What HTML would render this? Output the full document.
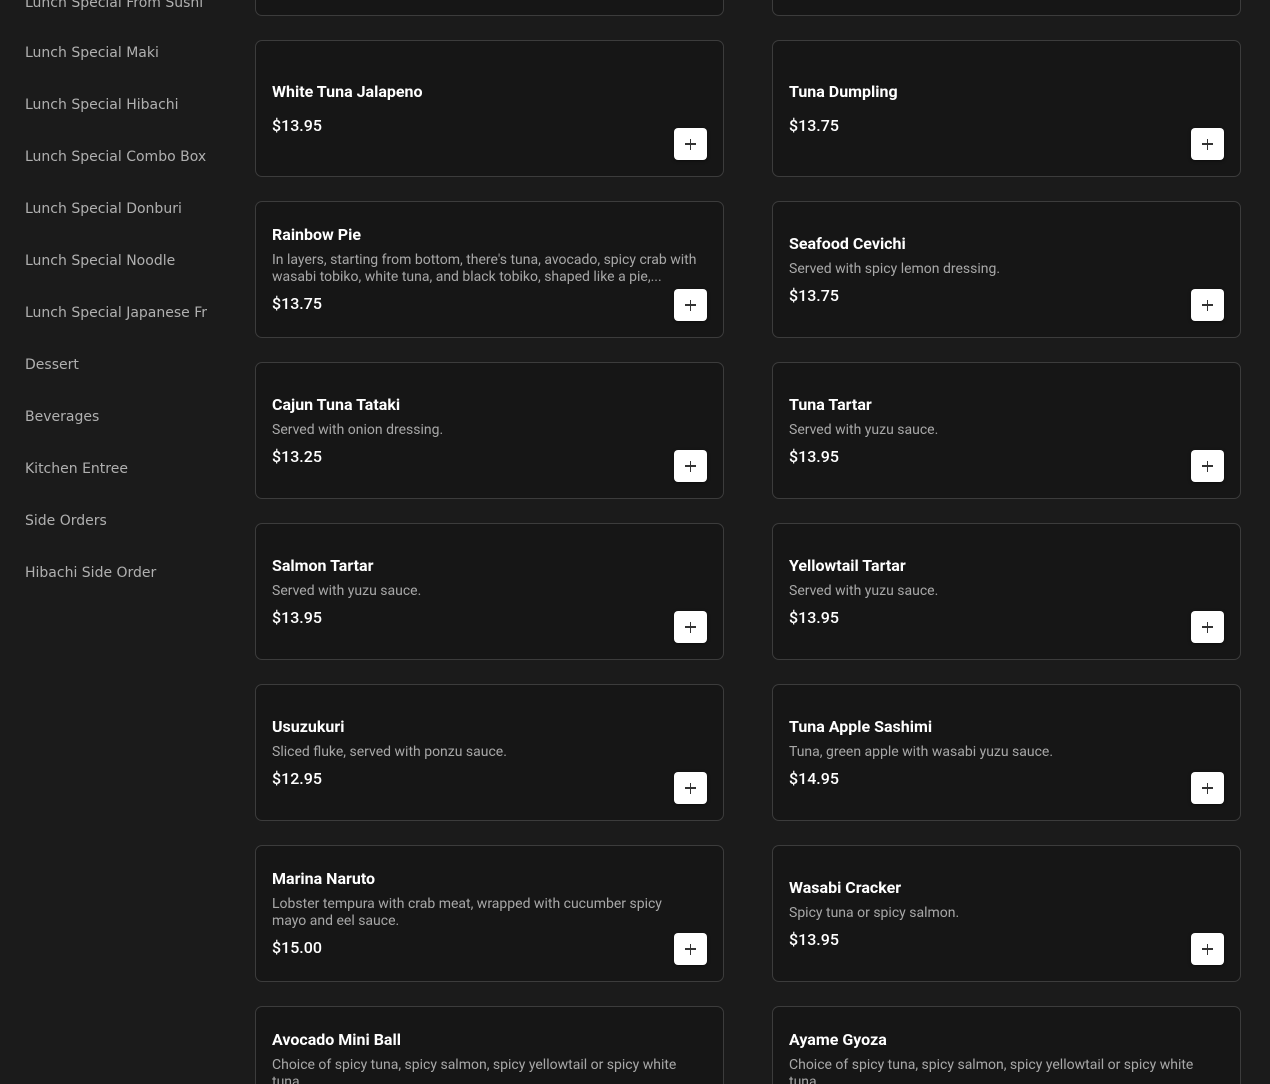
<!DOCTYPE html>
<html><head><meta charset="utf-8"><style>
*{box-sizing:border-box;margin:0;padding:0}
html,body{width:1270px;height:1084px;overflow:hidden}
body{background:#1b1b1b;position:relative;font-family:"Roboto","Liberation Sans",sans-serif}
.wrap{position:absolute;left:0;top:0;width:1270px;height:1084px;overflow:hidden}
.nav{position:absolute;left:25px;font-family:"DejaVu Sans",sans-serif;font-size:14px;color:#b0b0b0;line-height:20px}
.card{position:absolute;width:469px;height:137px;border:1px solid #3c3c3c;border-radius:7px;background:#161616;display:flex;flex-direction:column;justify-content:center;padding:0 16px}
.t{font-size:16px;font-weight:bold;color:#fff;line-height:20px;margin-bottom:7px}
.d{font-size:14px;color:#a8a8a8;line-height:17px;margin-bottom:8px;padding-right:10px}
.nd{margin-top:7px}
.p{font-size:16px;color:#fff;line-height:20px;font-weight:500}
.b{position:absolute;right:16px;bottom:16px;width:33px;height:32px;background:#fff;border-radius:4px;box-shadow:0 1px 3px rgba(0,0,0,.5)}
.b:before,.b:after{content:"";position:absolute;background:#333;left:11px;top:15px;width:11px;height:1.5px}
.b:after{left:15.75px;top:10.5px;width:1.5px;height:11px}
</style></head><body><div class="wrap">
<div class="nav" style="top:-7px">Lunch Special From Sushi</div>
<div class="nav" style="top:43px">Lunch Special Maki</div>
<div class="nav" style="top:95px">Lunch Special Hibachi</div>
<div class="nav" style="top:147px">Lunch Special Combo Box</div>
<div class="nav" style="top:199px">Lunch Special Donburi</div>
<div class="nav" style="top:251px">Lunch Special Noodle</div>
<div class="nav" style="top:303px">Lunch Special Japanese Fr</div>
<div class="nav" style="top:355px">Dessert</div>
<div class="nav" style="top:407px">Beverages</div>
<div class="nav" style="top:459px">Kitchen Entree</div>
<div class="nav" style="top:511px">Side Orders</div>
<div class="nav" style="top:563px">Hibachi Side Order</div>

<div class="card" style="left:255px;top:-121px"></div>
<div class="card" style="left:772px;top:-121px"></div>

<div class="card" style="left:255px;top:40px"><div class="t">White Tuna Jalapeno</div><div class="p nd">$13.95</div><div class="b"></div></div>
<div class="card" style="left:772px;top:40px"><div class="t">Tuna Dumpling</div><div class="p nd">$13.75</div><div class="b"></div></div>

<div class="card" style="left:255px;top:201px"><div class="t">Rainbow Pie</div><div class="d">In layers, starting from bottom, there's tuna, avocado, spicy crab with wasabi tobiko, white tuna, and black tobiko, shaped like a pie,...</div><div class="p">$13.75</div><div class="b"></div></div>
<div class="card" style="left:772px;top:201px"><div class="t">Seafood Cevichi</div><div class="d">Served with spicy lemon dressing.</div><div class="p">$13.75</div><div class="b"></div></div>

<div class="card" style="left:255px;top:362px"><div class="t">Cajun Tuna Tataki</div><div class="d">Served with onion dressing.</div><div class="p">$13.25</div><div class="b"></div></div>
<div class="card" style="left:772px;top:362px"><div class="t">Tuna Tartar</div><div class="d">Served with yuzu sauce.</div><div class="p">$13.95</div><div class="b"></div></div>

<div class="card" style="left:255px;top:523px"><div class="t">Salmon Tartar</div><div class="d">Served with yuzu sauce.</div><div class="p">$13.95</div><div class="b"></div></div>
<div class="card" style="left:772px;top:523px"><div class="t">Yellowtail Tartar</div><div class="d">Served with yuzu sauce.</div><div class="p">$13.95</div><div class="b"></div></div>

<div class="card" style="left:255px;top:684px"><div class="t">Usuzukuri</div><div class="d">Sliced fluke, served with ponzu sauce.</div><div class="p">$12.95</div><div class="b"></div></div>
<div class="card" style="left:772px;top:684px"><div class="t">Tuna Apple Sashimi</div><div class="d">Tuna, green apple with wasabi yuzu sauce.</div><div class="p">$14.95</div><div class="b"></div></div>

<div class="card" style="left:255px;top:845px"><div class="t">Marina Naruto</div><div class="d">Lobster tempura with crab meat, wrapped with cucumber spicy mayo and eel sauce.</div><div class="p">$15.00</div><div class="b"></div></div>
<div class="card" style="left:772px;top:845px"><div class="t">Wasabi Cracker</div><div class="d">Spicy tuna or spicy salmon.</div><div class="p">$13.95</div><div class="b"></div></div>

<div class="card" style="left:255px;top:1006px"><div class="t">Avocado Mini Ball</div><div class="d">Choice of spicy tuna, spicy salmon, spicy yellowtail or spicy white tuna.</div><div class="p">$9.95</div><div class="b"></div></div>
<div class="card" style="left:772px;top:1006px"><div class="t">Ayame Gyoza</div><div class="d">Choice of spicy tuna, spicy salmon, spicy yellowtail or spicy white tuna.</div><div class="p">$9.95</div><div class="b"></div></div>
</div></body></html>
